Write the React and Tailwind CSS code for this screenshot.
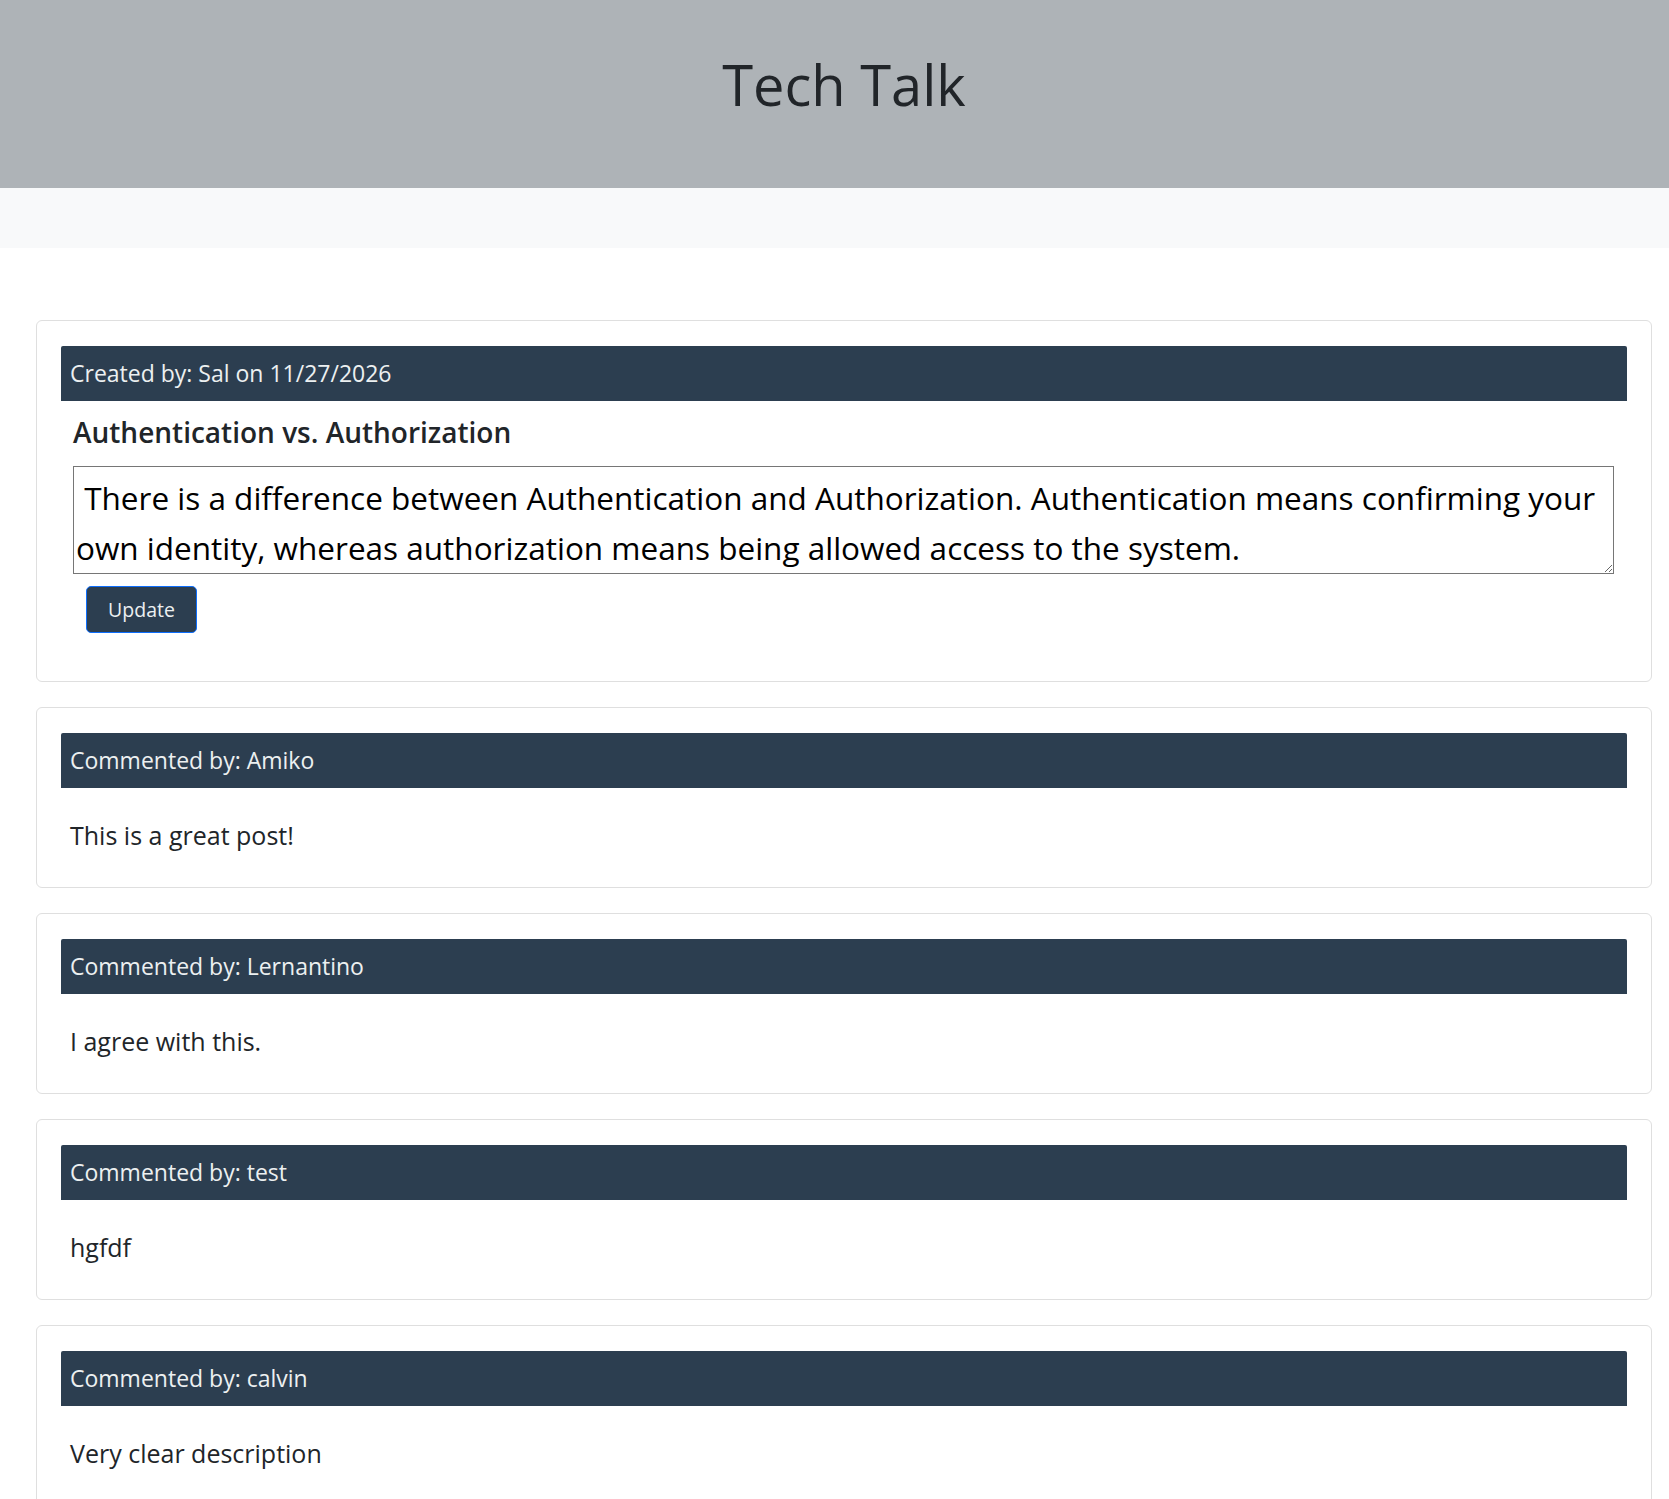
import { useState } from 'react';

const comments = [
    { id: 1, author: 'Amiko', text: 'This is a great post!' },
    { id: 2, author: 'Lernantino', text: 'I agree with this.' },
    { id: 3, author: 'test', text: 'hgfdf' },
    { id: 4, author: 'calvin', text: 'Very clear description' },
];

const App = () => {
    const [body, setBody] = useState(
        ' There is a difference between Authentication and Authorization. Authentication means confirming your own identity, whereas authorization means being allowed access to the system.'
    );

    return (
        <div className="min-h-screen bg-white text-[#212529] font-['Segoe_UI','Open_Sans',sans-serif]">
            {/* HEADER */}
            <header className="bg-[#aeb3b7] h-[188px] pl-[36px] pr-[17px] flex justify-center pt-[44px]">
                <h1 className="text-[56px] leading-[80px] font-medium text-[#212529]">Tech Talk</h1>
            </header>
            <div className="bg-[#f8f9fa] h-[60px]"></div>

            <main className="pl-[36px] pr-[17px] pt-[72px] flex flex-col gap-[25px]">
                {/* POST */}
                <section className="border border-[#dfdfdf] rounded-[6px] px-[24px] pt-[25px] pb-[48px]">
                    <div className="bg-[#2c3e50] text-[#ecf0f1] h-[55px] rounded-t-[2px] px-[9px] flex items-center text-[23px]">
                        Created by: Sal on 11/27/2026
                    </div>
                    <div className="pl-[12px] pr-[13px]">
                        <h2 className="text-[28px] font-semibold leading-[34px] mt-[14px] mb-[17px]">Authentication vs. Authorization</h2>
                        <textarea
                            value={body}
                            onChange={e => setBody(e.target.value)}
                            className="block w-full h-[108px] border border-[#767676] px-[2px] pt-[6px] pb-0 text-[31.5px] leading-[50px] text-black"
                        />
                        <button className="mt-[12px] ml-[13px] w-[111px] h-[47px] bg-[#2c3e50] border border-[#0d6efd] rounded-[5px] text-[#ecf0f1] text-[19.5px]">
                            Update
                        </button>
                    </div>
                </section>

                {/* COMMENTS */}
                {comments.map(c => (
                    <section key={c.id} className="border border-[#dfdfdf] rounded-[6px] px-[24px] pt-[25px]">
                        <div className="bg-[#2c3e50] text-[#ecf0f1] h-[55px] rounded-t-[2px] px-[9px] flex items-center text-[23px]">
                            Commented by: {c.author}
                        </div>
                        <p className="px-[9px] pt-[29px] pb-[34px] text-[25px] leading-[36px]">{c.text}</p>
                    </section>
                ))}
            </main>
        </div>
    );
};

export default App;
